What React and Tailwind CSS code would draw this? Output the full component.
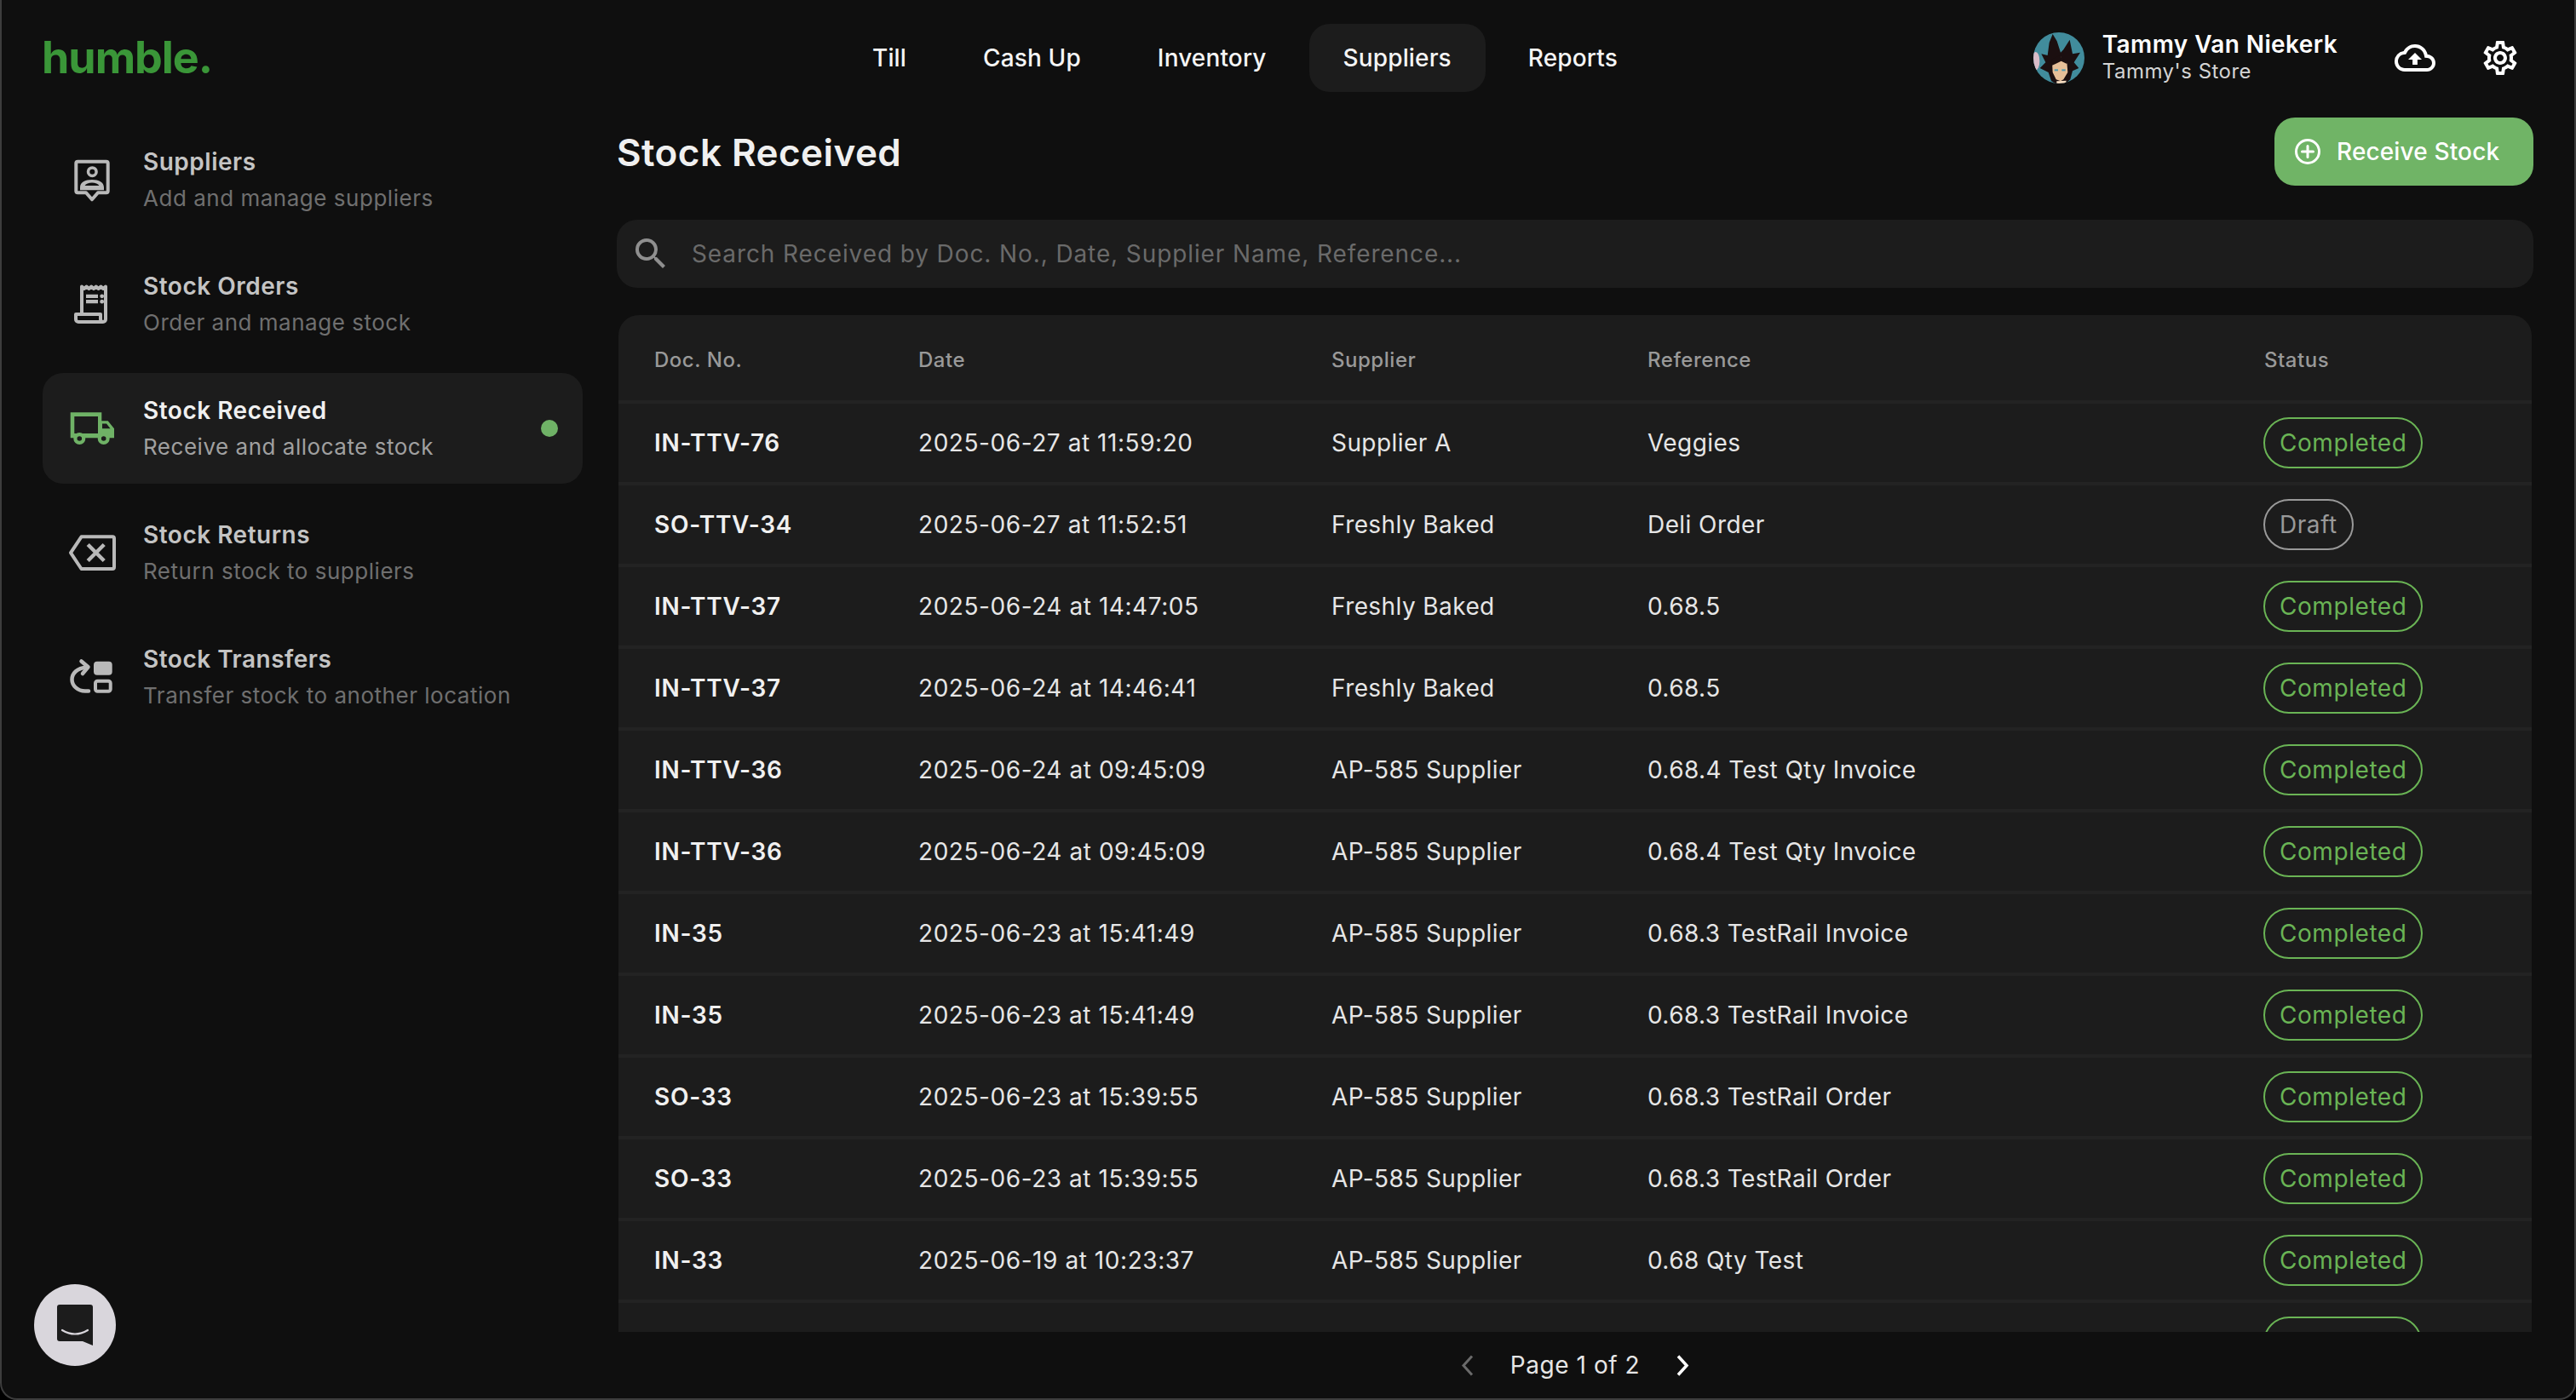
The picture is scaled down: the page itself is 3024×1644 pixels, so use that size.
import React from "react";
import { MdOutlineCloudUpload, MdOutlineSettings, MdSearch } from "react-icons/md";

const rows = [
  ["IN-TTV-76", "2025-06-27 at 11:59:20", "Supplier A", "Veggies", "Completed"],
  ["SO-TTV-34", "2025-06-27 at 11:52:51", "Freshly Baked", "Deli Order", "Draft"],
  ["IN-TTV-37", "2025-06-24 at 14:47:05", "Freshly Baked", "0.68.5", "Completed"],
  ["IN-TTV-37", "2025-06-24 at 14:46:41", "Freshly Baked", "0.68.5", "Completed"],
  ["IN-TTV-36", "2025-06-24 at 09:45:09", "AP-585 Supplier", "0.68.4 Test Qty Invoice", "Completed"],
  ["IN-TTV-36", "2025-06-24 at 09:45:09", "AP-585 Supplier", "0.68.4 Test Qty Invoice", "Completed"],
  ["IN-35", "2025-06-23 at 15:41:49", "AP-585 Supplier", "0.68.3 TestRail Invoice", "Completed"],
  ["IN-35", "2025-06-23 at 15:41:49", "AP-585 Supplier", "0.68.3 TestRail Invoice", "Completed"],
  ["SO-33", "2025-06-23 at 15:39:55", "AP-585 Supplier", "0.68.3 TestRail Order", "Completed"],
  ["SO-33", "2025-06-23 at 15:39:55", "AP-585 Supplier", "0.68.3 TestRail Order", "Completed"],
  ["IN-33", "2025-06-19 at 10:23:37", "AP-585 Supplier", "0.68 Qty Test", "Completed"],
  ["", "", "", "", ""],
];

const GRID = "grid grid-cols-[310px_485px_371px_724px_1fr] items-center pl-[42px]";

function SupplierIcon() {
  return (
    <svg width="80" height="80" viewBox="0 0 80 80" fill="none" className="shrink-0 text-[#b9b9b9]">
      <path d="M21.3 18.7h33.4a2 2 0 0 1 2 2v32.6a2 2 0 0 1-2 2H45l-7 8-7-8h-9.7a2 2 0 0 1-2-2V20.7a2 2 0 0 1 2-2z" stroke="currentColor" strokeWidth="4" strokeLinejoin="round" />
      <circle cx="38.3" cy="30.7" r="4.8" stroke="currentColor" strokeWidth="3.5" />
      <path fillRule="evenodd" fill="currentColor" d="M24 52.3V49c0-6 6-9 14-9s14 3 14 9v3.3zM29.5 47h17c-1.5-2.2-4.5-3.5-8.500-3.500s-7 1.300-8.500 3.500z" />
    </svg>
  );
}
function OrdersIcon() {
  return (
    <svg width="80" height="80" viewBox="0 0 80 80" fill="none" className="shrink-0 text-[#b9b9b9]">
      <path d="M26 50V19.500l2.800 2.500 2.800-2.500 2.800 2.500 2.800-2.500 2.800 2.500 2.800-2.500 2.800 2.500 2.800-2.500 2.800 2.500 2.800-2.500V58a3 3 0 0 1-3 3H22a3 3 0 0 1-3-3v-6h29v6a3 3 0 0 0 3 3" stroke="currentColor" strokeWidth="4" strokeLinejoin="round" />
      <path d="M31 30.800h14M31 37.200h14" stroke="currentColor" strokeWidth="4.200" />
      <circle cx="49.700" cy="30.800" r="2.400" fill="currentColor" />
      <circle cx="49.700" cy="37.200" r="2.400" fill="currentColor" />
    </svg>
  );
}
function TruckIcon() {
  return (
    <svg width="80" height="80" viewBox="0 0 80 80" fill="none" className="shrink-0 text-[#6fb266]">
      <path fillRule="evenodd" fill="currentColor" d="M12.700 21.300H49.300V31.300H56.700L64 40.300V51.300H12.700ZM17.300 26V46H45V26ZM50 34.500V40.300H59.500L55 34.500Z" />
      <circle cx="23.300" cy="52" r="4.900" fill="#1c1c1c" stroke="currentColor" strokeWidth="4.200" />
      <circle cx="51.700" cy="52" r="4.900" fill="#1c1c1c" stroke="currentColor" strokeWidth="4.200" />
    </svg>
  );
}
function ReturnIcon() {
  return (
    <svg width="80" height="80" viewBox="0 0 80 80" fill="none" className="shrink-0 text-[#b9b9b9]">
      <path d="M25.500 21.300H62a2 2 0 0 1 2 2V57a2 2 0 0 1-2 2H25.500L13 40.200Z" stroke="currentColor" strokeWidth="4" strokeLinejoin="round" />
      <path d="M33.200 30.500L52.200 49.500M52.200 30.500L33.200 49.500" stroke="currentColor" strokeWidth="4.500" />
    </svg>
  );
}
function TransferIcon() {
  return (
    <svg width="80" height="80" viewBox="0 0 80 80" fill="none" className="shrink-0 text-[#b9b9b9]">
      <rect x="40" y="21.700" width="21.700" height="16" rx="4" fill="currentColor" />
      <rect x="42" y="44.700" width="17.700" height="12" rx="2.500" stroke="currentColor" strokeWidth="4" />
      <path d="M34 56.500H30C21 56.500 14.500 50 14.500 43C14.500 36 20 29.500 32 28.500" stroke="currentColor" strokeWidth="4.500" strokeLinecap="round" />
      <path d="M25.500 21.500L33.500 28.300L27 36" stroke="currentColor" strokeWidth="4.500" strokeLinecap="round" strokeLinejoin="round" />
    </svg>
  );
}

const navItems = [
  ["Suppliers", "Add and manage suppliers", SupplierIcon],
  ["Stock Orders", "Order and manage stock", OrdersIcon],
  ["Stock Received", "Receive and allocate stock", TruckIcon],
  ["Stock Returns", "Return stock to suppliers", ReturnIcon],
  ["Stock Transfers", "Transfer stock to another location", TransferIcon],
];

function Avatar() {
  return (
    <div className="w-[60px] h-[60px] rounded-full overflow-hidden shrink-0">
      <svg width="60" height="60" viewBox="22 24 180 180">
        <rect x="22" y="24" width="180" height="180" fill="#418c9c" />
        <ellipse cx="30" cy="125" rx="14" ry="32" fill="#d9bcc8" />
        <path fill="#1b0f10" d="M90 30L105 55L118 95L128 85L150 50L160 100L187 95L165 130L182 150L160 160L152 190L135 205L100 205L85 195L75 165L45 150L65 130L50 100L72 105L78 60Z" />
        <path fill="#e6bf98" d="M88 128L100 122L118 108L122 120L140 128L143 165L128 190L118 196L102 190L90 165Z" />
        <path fill="#1b0f10" d="M85 120L118 103L122 118L145 122L140 135L120 125L100 135L88 140Z" />
        <rect x="96" y="154" width="13" height="6" fill="#4f9bb0" />
        <rect x="122" y="154" width="13" height="6" fill="#4f9bb0" />
        <path fill="#f1d9bd" d="M104 196L138 194L136 204L104 204Z" />
      </svg>
    </div>
  );
}

function Badge({ label }) {
  if (!label) {
    return <span className="block -ml-[1px] h-[60px] w-[186px] rounded-full border-2 border-[#6ab455]" />;
  }
  const green = label === "Completed";
  return (
    <span
      className={
        "inline-flex items-center -ml-[1px] h-[60px] rounded-full border-2 px-[17px] text-[28px] tracking-[0.02em] " +
        (green ? "border-[#6ab455] text-[#6ab455]" : "border-[#999999] text-[#999999]")
      }
    >
      {label}
    </span>
  );
}

export default function App() {
  return (
    <div className="w-[3024px] h-[1644px] bg-black font-['Inter','Liberation_Sans',sans-serif]">
      <div className="relative flex flex-col w-full h-full overflow-hidden bg-[#0f0f0f] border-x-2 border-b-2 border-[#3d3d3d] rounded-b-[20px]">
        <header className="flex items-center h-[136px] shrink-0">
          <div className="w-[982px] pl-[47px] shrink-0">
            <span className="text-[52px] leading-none font-bold tracking-[-0.02em] text-[#3a9638]">humble.</span>
          </div>
          <nav className="flex gap-[10px]">
            {["Till", "Cash Up", "Inventory", "Suppliers", "Reports"].map((n) => (
              <div
                key={n}
                className={
                  "flex items-center h-[80px] px-[40px] rounded-[24px] text-[28px] font-medium tracking-[0.005em] text-[#f5f5f5] " +
                  (n === "Suppliers" ? "bg-[#1c1c1c]" : "")
                }
              >
                {n}
              </div>
            ))}
          </nav>
          <div className="ml-auto flex items-center pr-[63px]">
            <Avatar />
            <div className="ml-[21px] flex flex-col pb-[4px]">
              <span className="text-[28px] leading-[36px] font-semibold tracking-[0.014em] text-white">Tammy Van Niekerk</span>
              <span className="text-[24px] leading-[28px] tracking-[0.02em] text-[#d4d4d4]">Tammy's Store</span>
            </div>
            <MdOutlineCloudUpload className="ml-[67px] text-white" size={48} />
            <MdOutlineSettings className="ml-[52px] text-white" size={48} />
          </div>
        </header>

        <div className="flex flex-1 min-h-0">
          <aside className="w-[722px] shrink-0 pl-[48px] pr-[40px] pt-[10px]">
            <div className="flex flex-col gap-[16px]">
              {navItems.map(([title, sub, Icon]) => {
                const active = title === "Stock Received";
                return (
                  <div
                    key={title}
                    className={"flex items-center h-[130px] pl-[20px] pr-[29px] rounded-[24px] " + (active ? "bg-[#1c1c1c]" : "")}
                  >
                    <Icon />
                    <div className="ml-[18px] flex-1 flex flex-col gap-[8px]">
                      <span className={"text-[28px] leading-[36px] font-semibold tracking-[0.018em] " + (active ? "text-[#f0f0f0]" : "text-[#c4c4c4]")}>{title}</span>
                      <span className={"text-[26px] leading-[34px] tracking-[0.02em] " + (active ? "text-[#a0a0a0]" : "text-[#6f6f6f]")}>{sub}</span>
                    </div>
                    {active && <span className="w-[20px] h-[20px] rounded-full bg-[#6fb266]" />}
                  </div>
                );
              })}
            </div>
          </aside>

          <main className="flex-1 min-w-0 flex flex-col pr-[48px]">
            <div className="flex items-center justify-between h-[80px] mt-[2px] shrink-0">
              <h1 className="pt-[2px] text-[44px] font-semibold tracking-[0.01em] text-[#f0f0f0]">Stock Received</h1>
              <button className="flex items-center h-[80px] w-[304px] pl-[23px] rounded-[24px] bg-[#70b466] text-white text-[28px] font-medium tracking-[0.005em]">
                <svg width="32" height="32" viewBox="0 0 32 32" fill="none" stroke="currentColor" strokeWidth="3" className="shrink-0">
                  <circle cx="16" cy="16" r="13.500" />
                  <path d="M16 9.500v13M9.500 16h13" strokeLinecap="round" />
                </svg>
                <span className="ml-[18px]">Receive Stock</span>
              </button>
            </div>

            <div className="flex items-center h-[80px] mt-[40px] pl-[16px] rounded-[24px] bg-[#1c1c1c] shrink-0">
              <MdSearch className="text-[#8f8f8f]" size={48} />
              <span className="ml-[24px] text-[28px] tracking-[0.032em] text-[#6a6a6a]">
                Search Received by Doc. No., Date, Supplier Name, Reference...
              </span>
            </div>

            <div className="flex-1 min-h-0 mt-[32px] mx-[2px] rounded-t-[24px] bg-[#1c1c1c] overflow-hidden">
              <div className={GRID + " h-[100px] pt-[5px] text-[24px] font-medium tracking-[0.022em] text-[#999999]"}>
                <span>Doc. No.</span>
                <span>Date</span>
                <span>Supplier</span>
                <span>Reference</span>
                <span>Status</span>
              </div>
              {rows.map((r, i) => (
                <div key={i} className={GRID + " h-[96px] border-t-4 border-[#232323] text-[28px] tracking-[0.015em] text-[#e6e6e6]"}>
                  <span className="font-semibold tracking-[0.025em] text-[#f0f0f0]">{r[0]}</span>
                  <span className="tracking-[0.02em]">{r[1]}</span>
                  <span>{r[2]}</span>
                  <span>{r[3]}</span>
                  <span className="flex"><Badge label={r[4]} /></span>
                </div>
              ))}
            </div>

            <div className="h-[78px] shrink-0 flex items-center justify-center text-[28px] tracking-[0.02em] text-[#e6e6e6]">
              <svg width="15" height="25" viewBox="0 0 15 25" fill="none" stroke="#6a6a6a" strokeWidth="3" className="shrink-0">
                <path d="M13 1.500L3 12.500L13 23.500" />
              </svg>
              <span className="mx-[43px]">Page 1 of 2</span>
              <svg width="15" height="25" viewBox="0 0 15 25" fill="none" stroke="#ffffff" strokeWidth="3.500" className="shrink-0">
                <path d="M2 1.500L12 12.500L2 23.500" />
              </svg>
            </div>
          </main>
        </div>

        <div className="absolute left-[38px] top-[1508px] w-[96px] h-[96px] rounded-full bg-[#d9d6dc]">
          <svg width="96" height="96" viewBox="0 0 96 96" fill="none">
            <path d="M30 24H66a3 3 0 0 1 3 3V72L57 67H30a3 3 0 0 1-3-3V27a3 3 0 0 1 3-3z" fill="#1c1c1c" />
            <path d="M33 54Q48 63 63 54" stroke="#d9d6dc" strokeWidth="2.200" strokeLinecap="round" />
          </svg>
        </div>
      </div>
    </div>
  );
}
